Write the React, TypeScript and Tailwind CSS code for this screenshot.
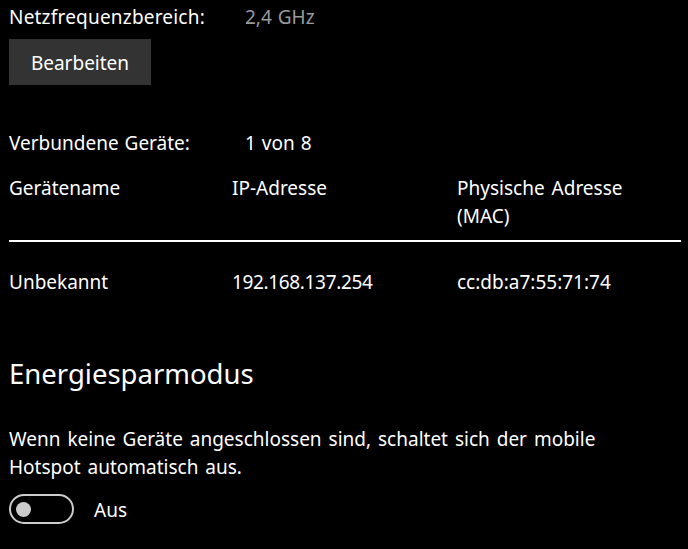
import React from "react";

export default function App() {
  return (
    <div
      className="w-[688px] h-[549px] bg-black text-white overflow-hidden pl-[9px]"
      style={{ fontFamily: '"Noto Sans", "Open Sans", sans-serif' }}
    >
      <div className="flex text-[19px] leading-[28px] mt-[3px] [word-spacing:1px]">
        <div className="w-[236px] tracking-[0.2px]">Netzfrequenzbereich:</div>
        <div className="text-[#9a9a9a]">2,4 GHz</div>
      </div>
      <button className="mt-[8px] w-[142px] h-[46px] bg-[#333333] text-[19px] text-white pt-[2px]">
        Bearbeiten
      </button>
      <div className="flex text-[19px] leading-[28px] mt-[44px] [word-spacing:1px]">
        <div className="w-[236px]">Verbundene Geräte:</div>
        <div>1 von 8</div>
      </div>
      <div className="flex text-[19px] leading-[28px] mt-[17px] w-[672px] [word-spacing:2px]">
        <div className="w-[223px]">Gerätename</div>
        <div className="w-[225px]">IP-Adresse</div>
        <div className="w-[200px]">
          Physische Adresse
          <br />
          (MAC)
        </div>
      </div>
      <div className="mt-[10px] h-[2px] w-[672px] bg-white" />
      <div className="flex text-[19px] leading-[28px] mt-[26px]">
        <div className="w-[223px]">Unbekannt</div>
        <div className="w-[225px] tracking-[-0.35px]">192.168.137.254</div>
        <div>cc:db:a7:55:71:74</div>
      </div>
      <div className="mt-[58px] text-[27.5px] leading-[40px]">Energiesparmodus</div>
      <div className="mt-[31px] text-[19px] leading-[28px] w-[640px] [word-spacing:2px]">
        Wenn keine Geräte angeschlossen sind, schaltet sich der mobile
        <br />
        Hotspot automatisch aus.
      </div>
      <div className="mt-[13px] flex items-center">
        <div className="w-[65px] h-[30px] rounded-full border-2 border-[#cccccc] flex items-center pl-[5px]">
          <div className="w-[15px] h-[15px] rounded-full bg-[#cccccc]" />
        </div>
        <div className="ml-[20px] text-[19px] leading-[28px] pt-[2px]">Aus</div>
      </div>
    </div>
  );
}
